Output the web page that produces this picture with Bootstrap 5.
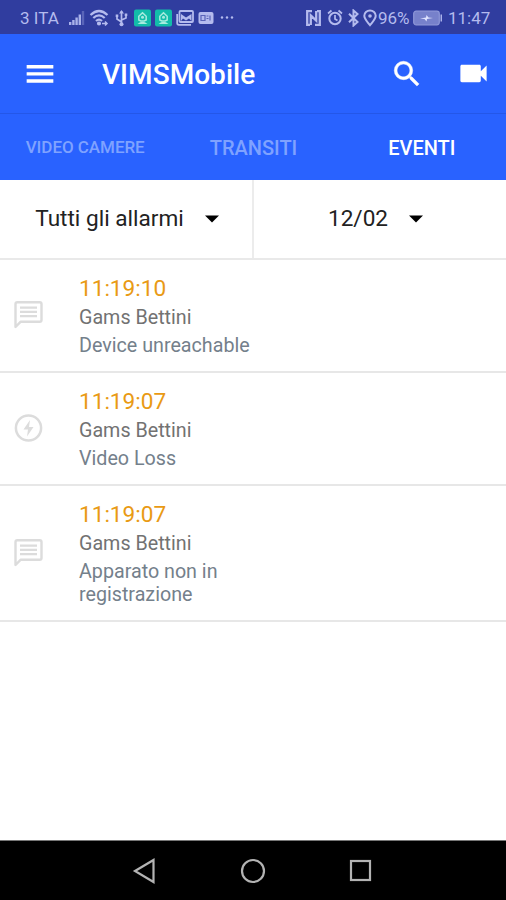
<!DOCTYPE html>
<html lang="it">
<head>
<meta charset="utf-8">
<meta name="viewport" content="width=device-width, initial-scale=1">
<title>VIMSMobile</title>
<link href="https://cdn.jsdelivr.net/npm/bootstrap@5.3.0/dist/css/bootstrap.min.css" rel="stylesheet">
<style>
body{font-family:Roboto,"Liberation Sans",sans-serif;width:506px;height:900px;overflow:hidden;color:#222}
svg{display:block;flex:none}
.status-bar{height:34px;background:#303d9f;color:#b4bbee;font-size:17px;padding:2px 0 0 20px}
.status-bar span{white-space:nowrap;flex:none;line-height:34px}
.carrier{width:49px}
.percent{width:35px;margin-left:1px}
.gap-s3{margin-left:3px}
.gap-s5{margin-left:5px}
.gap-s6{margin-left:6px}
.status-right{margin-left:71px}
.app-bar{height:80px;background:#2962ff;border-bottom:1px solid #2457e8;padding:0 15px 0 24px}
.app-title{font-size:28px;font-weight:500;line-height:32px;margin-left:46px;padding-top:2px;letter-spacing:.05px}
.video-key{margin-left:32px}
.tab-bar{height:66px;background:#2962ff;font-size:20px;font-weight:500;color:#7fa2ff;padding:2px 0 0 1px}
.tab-small{font-size:17px;letter-spacing:-.05px}
.filter-bar{height:80px;font-size:22.6px;border-bottom:2px solid #e9e9e9}
.filter-bar .divided{width:254px;border-right:2px solid #ececec;padding-left:2px}
.filter-date{padding-right:9px}
.caret-mark{margin-left:21px}
.event{border-bottom:2px solid #e7e7e7;padding:16px 0 0 14px}
.event-text{margin-left:35px;width:190px}
.event-first{height:113px}
.event-second{height:113px}
.event-third{height:136px}
.event-third svg{margin-top:36px}
.event-time{font-size:22.6px;line-height:26px;color:#e99a14}
.event-site{font-size:19.7px;line-height:24px;margin-top:4px;color:#727272}
.event-note{font-size:19.7px;line-height:23px;margin-top:4px;color:#74808b}
.nav-keys{height:60px;background:#000;border-top:1px solid #777}
.home-key{margin:0 82px}
</style>
<script src="https://cdn.jsdelivr.net/npm/bootstrap@5.3.0/dist/js/bootstrap.bundle.min.js"></script>
</head>
<body class="d-flex flex-column bg-white">
<div class="status-bar d-flex align-items-center">
  <span class="carrier">3 ITA</span>
  <svg width="16" height="18" viewBox="0 0 16 18" fill="#a9b2ea"><path d="M0 13h2.400v3H0zM3.200 11h2.400v5H3.200zM6.400 8.500h2.400v7.500H6.400zM9.600 5.500H12V16H9.600z"/><path d="M12.800 2h2.400v14h-2.400z" opacity=".35"/></svg>
  <svg class="ms-1" width="22" height="18" viewBox="0 0 22 18" fill="none" stroke="#b4bbee" stroke-width="2.200"><path d="M1.500 6Q10 -2 18.500 6M4.300 9Q10 3.700 15.700 9M7 12Q10 9.300 13 12"/><circle cx="10" cy="14.500" r="1"/><path d="M13 14.500h5M16 12.500l2 2-2 2" stroke-width="1.500"/></svg>
  <svg class="ms-1" width="13" height="18" viewBox="0 0 13 18" fill="none" stroke="#b4bbee" stroke-width="1.700"><path d="M6.500 2v13M6.500 13L2 10V7M6.500 11L11 9V6"/><path d="M4 4.500l2.500-3.500L9 4.500zM.7 5.500h2.600v2.600H.7zM9.700 4.500h2.600v2.600H9.700z" fill="#b4bbee" stroke="none"/><circle cx="6.500" cy="15.200" r="2" fill="#b4bbee" stroke="none"/></svg>
  <svg class="gap-s6" width="17" height="18" viewBox="0 0 17 18"><rect y=".5" width="17" height="17" rx="2" fill="#12bda9"/><path d="M4.800 11V7.300L8.500 3.700l3.700 3.600V11l-2 1h-3.400z" fill="none" stroke="#a7ebdf" stroke-width="1.500"/><circle cx="8.500" cy="8.200" r="1.500" fill="#a7ebdf"/><path d="M3.500 15q5-4.500 10 0z" fill="#a7ebdf"/></svg>
  <svg class="ms-1" width="17" height="18" viewBox="0 0 17 18"><rect y=".5" width="17" height="17" rx="2" fill="#12bda9"/><path d="M4.800 11V7.300L8.500 3.700l3.700 3.600V11l-2 1h-3.400z" fill="none" stroke="#a7ebdf" stroke-width="1.500"/><circle cx="8.500" cy="8.200" r="1.500" fill="#a7ebdf"/><path d="M3.500 15q5-4.500 10 0z" fill="#a7ebdf"/></svg>
  <svg class="ms-1" width="18" height="18" viewBox="0 0 18 18" fill="none" stroke="#b4bbee" stroke-width="1.800"><rect x="3.500" y="2" width="13.500" height="11" rx="1"/><path d="M1.200 5v9q0 1.800 1.800 1.800h12"/><path d="M5 12V5l5 3.500L15.500 5v7l-2.500-2.500-3 2-3-2z" fill="#b4bbee" stroke="none"/></svg>
  <svg class="ms-1" width="16" height="18" viewBox="0 0 16 18"><rect x=".5" y="3" width="15" height="12" rx="2" fill="#b4bbee"/><path d="M3 6.500h4v5H3zM8.500 7h2M8.500 9.500h2M12 6.500v5" fill="none" stroke="#5963b8" stroke-width="1.200"/></svg>
  <svg class="gap-s6" width="14" height="18" viewBox="0 0 14 18" fill="#b4bbee"><circle cx="2" cy="8.500" r="1.200"/><circle cx="7" cy="8.500" r="1.200"/><circle cx="12" cy="8.500" r="1.200"/></svg>
  <svg class="status-right" width="17" height="18" viewBox="0 0 17 18" fill="none" stroke="#b4bbee" stroke-width="2.300"><path d="M7 2.200H2.200v13.600H5M5.800 16V6.500l5.400 5V2M10 15.800h4.800V2.200H12"/></svg>
  <svg class="gap-s5" width="16" height="18" viewBox="0 0 16 18" fill="none" stroke="#b4bbee" stroke-width="2"><circle cx="8" cy="9.500" r="5.700"/><path d="M8 6v4l2.500 1.500M1 4.500L4.500 1.500M15 4.500L11.500 1.500" stroke-width="1.700"/></svg>
  <svg class="ms-1" width="13" height="18" viewBox="0 0 13 18" fill="none" stroke="#b4bbee" stroke-width="2"><path d="M2 4.800l8.500 8.200-4 3.500v-15l4 3.500L2 13.200"/></svg>
  <svg class="gap-s3" width="14" height="18" viewBox="0 0 14 18"><path d="M7 16.200C4 12.500 1.300 10 1.300 6.800a5.700 5.300 0 0 1 11.400 0C12.700 10 10 12.500 7 16.200z" fill="none" stroke="#b4bbee" stroke-width="2"/><circle cx="7" cy="7" r="1.800" fill="#b4bbee"/></svg>
  <span class="percent">96%</span>
  <svg width="30" height="18" viewBox="0 0 30 18"><rect x=".7" y="2.200" width="25.600" height="13.600" rx="2.500" fill="#7781cb" stroke="#8e97d8" stroke-width="1.200"/><path d="M27.500 5.500H29v7h-1.500z" fill="#a9b2ea"/><path d="M7 9.500l6-1 .5-2.500 2 2.500 4.500.5-6 1-.5 2.500-2-2.500z" fill="#dfe3ff"/></svg>
  <span class="gap-s5">11:47</span>
</div>

<header class="app-bar d-flex align-items-center text-white">
  <svg width="32" height="32" viewBox="0 0 24 24" fill="currentColor"><path d="M2 18.500h20v-2.500H2zM2 13.200h20v-2.500H2zM2 5.300v2.500h20V5.300z"/></svg>
  <div class="app-title">VIMSMobile</div>
  <svg class="ms-auto" width="34" height="34" viewBox="0 0 24 24" fill="currentColor" stroke="currentColor" stroke-width=".35"><path d="M15.500 14h-.79l-.28-.27A6.471 6.471 0 0 0 16 9.500 6.500 6.500 0 1 0 9.500 16c1.610 0 3.090-.59 4.230-1.570l.27.28v.79l5 4.990L20.490 19l-4.990-5zm-6 0C7.010 14 5 11.990 5 9.500S7.010 5 9.500 5 14 7.010 14 9.500 11.990 14 9.500 14z"/></svg>
  <svg class="video-key" width="35" height="35" viewBox="0 0 24 24" fill="currentColor"><path d="M17 10.500V7c0-.55-.45-1-1-1H4c-.55 0-1 .45-1 1v10c0 .55.45 1 1 1h12c.55 0 1-.45 1-1v-3.500l4 4v-11l-4 4z"/></svg>
</header>

<nav class="tab-bar row g-0 align-items-center text-center">
  <div class="col tab-small">VIDEO CAMERE</div>
  <div class="col">TRANSITI</div>
  <div class="col text-white">EVENTI</div>
</nav>

<div class="filter-bar d-flex">
  <div class="divided d-flex align-items-center justify-content-center"><span>Tutti gli allarmi</span><svg class="caret-mark" width="14" height="8" viewBox="0 0 14 8"><path d="M0 .5h14L7 7.500z"/></svg></div>
  <div class="filter-date flex-grow-1 d-flex align-items-center justify-content-center"><span>12/02</span><svg class="caret-mark" width="14" height="8" viewBox="0 0 14 8"><path d="M0 .5h14L7 7.500z"/></svg></div>
</div>

<main class="flex-grow-1">
  <div class="event event-first d-flex">
    <svg class="mt-4" width="30" height="30" viewBox="0 0 30 30" fill="none" stroke="#dcdcdc" stroke-width="2.400"><path d="M1.500 27V4q0-1.800 1.800-1.800h22.400q1.800 0 1.800 1.800v16q0 1.800-1.800 1.800H6.500z" stroke-linejoin="round"/><path d="M6 7.700h17M6 11.900h17M6 16.100h17" stroke-width="2.200"/></svg>
    <div class="event-text"><div class="event-time">11:19:10</div><div class="event-site">Gams Bettini</div><div class="event-note">Device unreachable</div></div>
  </div>
  <div class="event event-second d-flex">
    <svg class="mt-4" width="30" height="30" viewBox="0 0 30 30"><circle cx="14.500" cy="15" r="12.600" fill="none" stroke="#dcdcdc" stroke-width="2.500"/><path d="M16 7L9.500 16.500h4.500l-1 7L19.500 14H15z" fill="#dcdcdc"/></svg>
    <div class="event-text"><div class="event-time">11:19:07</div><div class="event-site">Gams Bettini</div><div class="event-note">Video Loss</div></div>
  </div>
  <div class="event event-third d-flex">
    <svg width="30" height="30" viewBox="0 0 30 30" fill="none" stroke="#dcdcdc" stroke-width="2.400"><path d="M1.500 27V4q0-1.800 1.800-1.800h22.400q1.800 0 1.800 1.800v16q0 1.800-1.800 1.800H6.500z" stroke-linejoin="round"/><path d="M6 7.700h17M6 11.900h17M6 16.100h17" stroke-width="2.200"/></svg>
    <div class="event-text"><div class="event-time">11:19:07</div><div class="event-site">Gams Bettini</div><div class="event-note">Apparato non in<br>registrazione</div></div>
  </div>
</main>

<footer class="nav-keys d-flex justify-content-center align-items-center">
  <svg width="26" height="26" viewBox="0 0 26 26" fill="none" stroke="#b3b3b3" stroke-width="2.200"><path d="M3 13L21.500 2v22z"/></svg>
  <svg class="home-key" width="26" height="26" viewBox="0 0 26 26" fill="none" stroke="#b3b3b3" stroke-width="2.200"><circle cx="13" cy="13" r="11"/></svg>
  <svg width="26" height="26" viewBox="0 0 26 26" fill="none" stroke="#b3b3b3" stroke-width="2.200"><rect x="3" y="3" width="19" height="19"/></svg>
</footer>
</body>
</html>
